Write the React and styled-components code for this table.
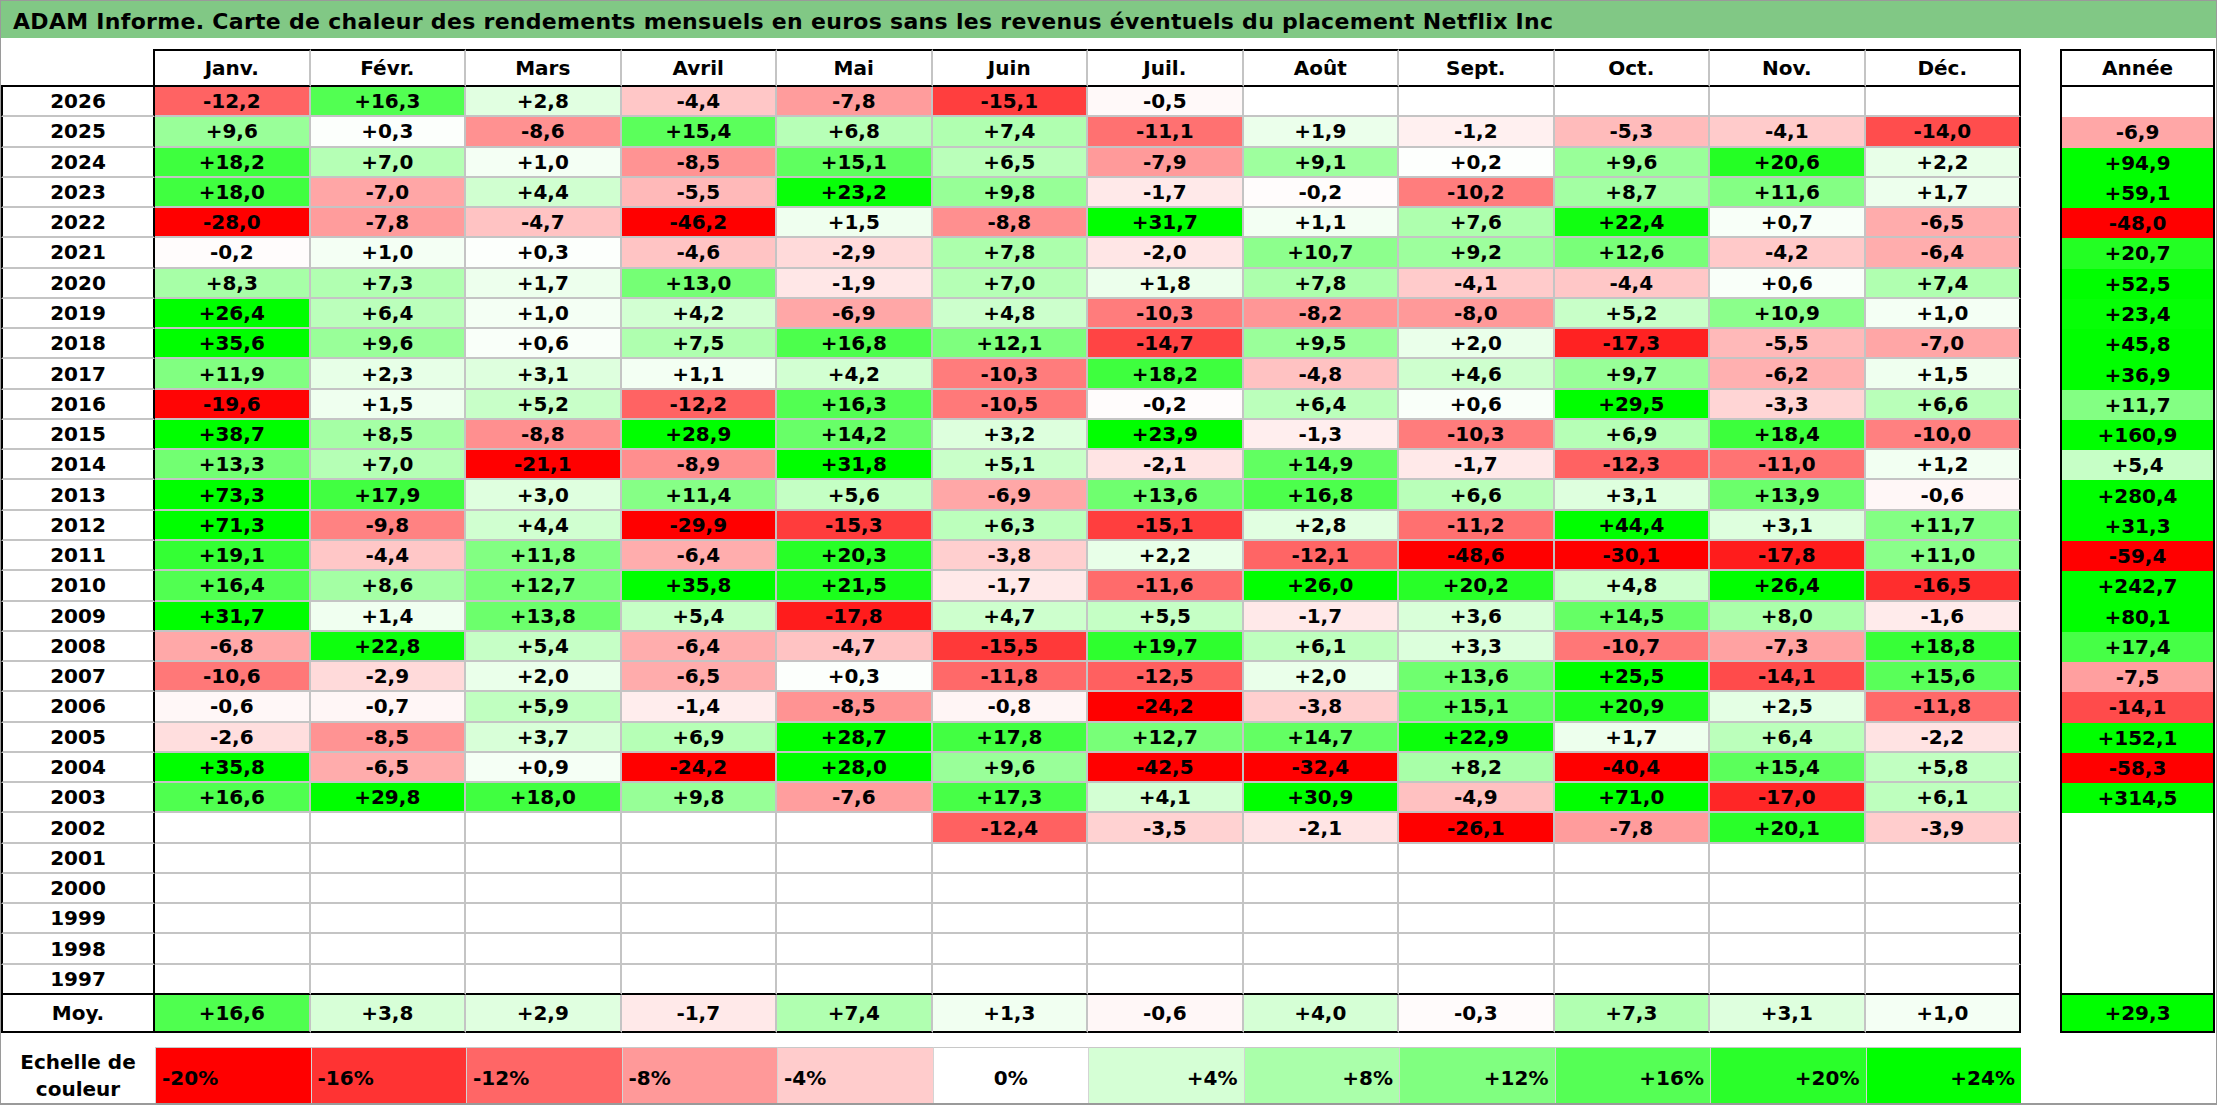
import React from 'react';
import styled, { createGlobalStyle } from 'styled-components';

const GRID = '#c4c4c4';
const MONTHS = ['Janv.', 'Févr.', 'Mars', 'Avril', 'Mai', 'Juin', 'Juil.', 'Août', 'Sept.', 'Oct.', 'Nov.', 'Déc.'];

const _ = null;
const ROWS = [
  [2026, [-12.2, 16.3, 2.8, -4.4, -7.8, -15.1, -0.5, _, _, _, _, _], _],
  [2025, [9.6, 0.3, -8.6, 15.4, 6.8, 7.4, -11.1, 1.9, -1.2, -5.3, -4.1, -14.0], -6.9],
  [2024, [18.2, 7.0, 1.0, -8.5, 15.1, 6.5, -7.9, 9.1, 0.2, 9.6, 20.6, 2.2], 94.9],
  [2023, [18.0, -7.0, 4.4, -5.5, 23.2, 9.8, -1.7, -0.2, -10.2, 8.7, 11.6, 1.7], 59.1],
  [2022, [-28.0, -7.8, -4.7, -46.2, 1.5, -8.8, 31.7, 1.1, 7.6, 22.4, 0.7, -6.5], -48.0],
  [2021, [-0.2, 1.0, 0.3, -4.6, -2.9, 7.8, -2.0, 10.7, 9.2, 12.6, -4.2, -6.4], 20.7],
  [2020, [8.3, 7.3, 1.7, 13.0, -1.9, 7.0, 1.8, 7.8, -4.1, -4.4, 0.6, 7.4], 52.5],
  [2019, [26.4, 6.4, 1.0, 4.2, -6.9, 4.8, -10.3, -8.2, -8.0, 5.2, 10.9, 1.0], 23.4],
  [2018, [35.6, 9.6, 0.6, 7.5, 16.8, 12.1, -14.7, 9.5, 2.0, -17.3, -5.5, -7.0], 45.8],
  [2017, [11.9, 2.3, 3.1, 1.1, 4.2, -10.3, 18.2, -4.8, 4.6, 9.7, -6.2, 1.5], 36.9],
  [2016, [-19.6, 1.5, 5.2, -12.2, 16.3, -10.5, -0.2, 6.4, 0.6, 29.5, -3.3, 6.6], 11.7],
  [2015, [38.7, 8.5, -8.8, 28.9, 14.2, 3.2, 23.9, -1.3, -10.3, 6.9, 18.4, -10.0], 160.9],
  [2014, [13.3, 7.0, -21.1, -8.9, 31.8, 5.1, -2.1, 14.9, -1.7, -12.3, -11.0, 1.2], 5.4],
  [2013, [73.3, 17.9, 3.0, 11.4, 5.6, -6.9, 13.6, 16.8, 6.6, 3.1, 13.9, -0.6], 280.4],
  [2012, [71.3, -9.8, 4.4, -29.9, -15.3, 6.3, -15.1, 2.8, -11.2, 44.4, 3.1, 11.7], 31.3],
  [2011, [19.1, -4.4, 11.8, -6.4, 20.3, -3.8, 2.2, -12.1, -48.6, -30.1, -17.8, 11.0], -59.4],
  [2010, [16.4, 8.6, 12.7, 35.8, 21.5, -1.7, -11.6, 26.0, 20.2, 4.8, 26.4, -16.5], 242.7],
  [2009, [31.7, 1.4, 13.8, 5.4, -17.8, 4.7, 5.5, -1.7, 3.6, 14.5, 8.0, -1.6], 80.1],
  [2008, [-6.8, 22.8, 5.4, -6.4, -4.7, -15.5, 19.7, 6.1, 3.3, -10.7, -7.3, 18.8], 17.4],
  [2007, [-10.6, -2.9, 2.0, -6.5, 0.3, -11.8, -12.5, 2.0, 13.6, 25.5, -14.1, 15.6], -7.5],
  [2006, [-0.6, -0.7, 5.9, -1.4, -8.5, -0.8, -24.2, -3.8, 15.1, 20.9, 2.5, -11.8], -14.1],
  [2005, [-2.6, -8.5, 3.7, 6.9, 28.7, 17.8, 12.7, 14.7, 22.9, 1.7, 6.4, -2.2], 152.1],
  [2004, [35.8, -6.5, 0.9, -24.2, 28.0, 9.6, -42.5, -32.4, 8.2, -40.4, 15.4, 5.8], -58.3],
  [2003, [16.6, 29.8, 18.0, 9.8, -7.6, 17.3, 4.1, 30.9, -4.9, 71.0, -17.0, 6.1], 314.5],
  [2002, [_, _, _, _, _, -12.4, -3.5, -2.1, -26.1, -7.8, 20.1, -3.9], _],
  [2001, Array(12).fill(_), _],
  [2000, Array(12).fill(_), _],
  [1999, Array(12).fill(_), _],
  [1998, Array(12).fill(_), _],
  [1997, Array(12).fill(_), _],
];

const AVERAGE = [16.6, 3.8, 2.9, -1.7, 7.4, 1.3, -0.6, 4.0, -0.3, 7.3, 3.1, 1.0];
const AVERAGE_YEAR = 29.3;
const SCALE = [-20, -16, -12, -8, -4, 0, 4, 8, 12, 16, 20, 24];

// red saturates at -20, green at +24, like the legend below the table
const heat = (v) => {
  if (v == null) return '#ffffff';
  if (v < 0) {
    const c = Math.round(255 * (1 - Math.min(1, -v / 20)));
    return `rgb(255, ${c}, ${c})`;
  }
  const c = Math.round(255 * (1 - Math.min(1, v / 24)));
  return `rgb(${c}, 255, ${c})`;
};

const fmt = (v) => (v == null ? '' : (v < 0 ? '-' : '+') + Math.abs(v).toFixed(1).replace('.', ','));

const GlobalStyle = createGlobalStyle`
  html, body {
    margin: 0;
    padding: 0;
    background: #ffffff;
  }
  body {
    font-family: "DejaVu Sans", "Liberation Sans", sans-serif;
    color: #000;
  }
`;

const Sheet = styled.div`
  box-sizing: border-box;
  width: 2217px;
  height: 1105px;
  border: 1px solid #9a9a9a;
  border-bottom-width: 2px;
  display: flex;
  flex-direction: column;
  font-family: "DejaVu Sans", "Liberation Sans", sans-serif;
  font-weight: bold;
  font-size: 20px;
  overflow: hidden;
`;

const TitleBar = styled.div`
  box-sizing: border-box;
  height: 37px;
  padding: 3px 0 0 12px;
  display: flex;
  align-items: center;
  background: #81c885;
  font-size: 22px;
  letter-spacing: 0.3px;
  white-space: nowrap;
`;

const Body = styled.div`
  display: flex;
  flex-direction: column;
  gap: 14px;
  padding-top: 11px;
`;

const TopArea = styled.div`
  display: flex;
  gap: 39px;
`;

const MainGrid = styled.div`
  width: 2020px;
  height: 984px;
  display: grid;
  grid-template-columns: 154px repeat(12, 1fr);
  grid-template-rows: 38px repeat(30, 1fr) 38px;
`;

const TotalsGrid = styled.div`
  width: 155px;
  height: 984px;
  display: grid;
  grid-template-rows: 38px repeat(30, 1fr) 38px;
`;

const Box = styled.div`
  box-sizing: border-box;
  min-width: 0;
  display: flex;
  align-items: center;
  justify-content: center;
  white-space: nowrap;
`;

const Corner = styled(Box)`
  border-right: 2px solid #000;
  border-bottom: 2px solid #000;
`;

const MonthHead = styled(Box)`
  border-top: 2px solid #000;
  border-bottom: 2px solid #000;
  border-right: 2px solid ${(p) => (p.$edge ? '#000' : GRID)};
`;

const YearLabel = styled(Box)`
  border-left: 2px solid #000;
  border-right: 2px solid #000;
  border-bottom: 2px solid ${(p) => (p.$edge ? '#000' : GRID)};
`;

const ValueCell = styled(Box)`
  background: ${(p) => p.$bg};
  border-right: 2px solid ${(p) => (p.$edgeX ? '#000' : GRID)};
  border-bottom: 2px solid ${(p) => (p.$edgeY ? '#000' : GRID)};
`;

const TotalHead = styled(Box)`
  border: 2px solid #000;
`;

const TotalCell = styled(Box)`
  background: ${(p) => p.$bg};
  border-left: 2px solid #000;
  border-right: 2px solid #000;
  border-bottom: ${(p) => (p.$edge ? '2px solid #000' : 'none')};
`;

const ScaleRow = styled.div`
  width: 2020px;
  height: 56px;
  display: grid;
  grid-template-columns: 154px repeat(12, 1fr);
`;

const ScaleLabel = styled(Box)`
  flex-direction: column;
  line-height: 27px;
  padding-top: 2px;
`;

const Swatch = styled(Box)`
  background: ${(p) => p.$bg};
  border-top: 1px solid #c8c8c8;
  border-left: 1px solid #d4d4d4;
  justify-content: ${(p) => p.$align};
  padding: 4px 6px 0 6px;
`;

const align = (v) => (v < 0 ? 'flex-start' : v > 0 ? 'flex-end' : 'center');

export default function App() {
  const last = ROWS.length - 1;
  return (
    <>
      <GlobalStyle />
      <Sheet>
        <TitleBar>
          ADAM Informe. Carte de chaleur des rendements mensuels en euros sans les revenus éventuels du placement Netflix Inc
        </TitleBar>
        <Body>
          <TopArea>
            <MainGrid>
              <Corner />
              {MONTHS.map((m, i) => (
                <MonthHead key={m} $edge={i === 11}>{m}</MonthHead>
              ))}
              {ROWS.map(([year, values], r) => (
                <React.Fragment key={year}>
                  <YearLabel $edge={r === last}>{year}</YearLabel>
                  {values.map((v, i) => (
                    <ValueCell key={i} $bg={heat(v)} $edgeX={i === 11} $edgeY={r === last}>
                      {fmt(v)}
                    </ValueCell>
                  ))}
                </React.Fragment>
              ))}
              <YearLabel $edge>Moy.</YearLabel>
              {AVERAGE.map((v, i) => (
                <ValueCell key={i} $bg={heat(v)} $edgeX={i === 11} $edgeY>
                  {fmt(v)}
                </ValueCell>
              ))}
            </MainGrid>
            <TotalsGrid>
              <TotalHead>Année</TotalHead>
              {ROWS.map(([year, , total], r) => (
                <TotalCell key={year} $bg={heat(total)} $edge={r === last}>
                  {fmt(total)}
                </TotalCell>
              ))}
              <TotalCell $bg={heat(AVERAGE_YEAR)} $edge>{fmt(AVERAGE_YEAR)}</TotalCell>
            </TotalsGrid>
          </TopArea>
          <ScaleRow>
            <ScaleLabel>
              <span>Echelle de</span>
              <span>couleur</span>
            </ScaleLabel>
            {SCALE.map((v) => (
              <Swatch key={v} $bg={heat(v)} $align={align(v)}>
                {v > 0 ? '+' : ''}{v}%
              </Swatch>
            ))}
          </ScaleRow>
        </Body>
      </Sheet>
    </>
  );
}
